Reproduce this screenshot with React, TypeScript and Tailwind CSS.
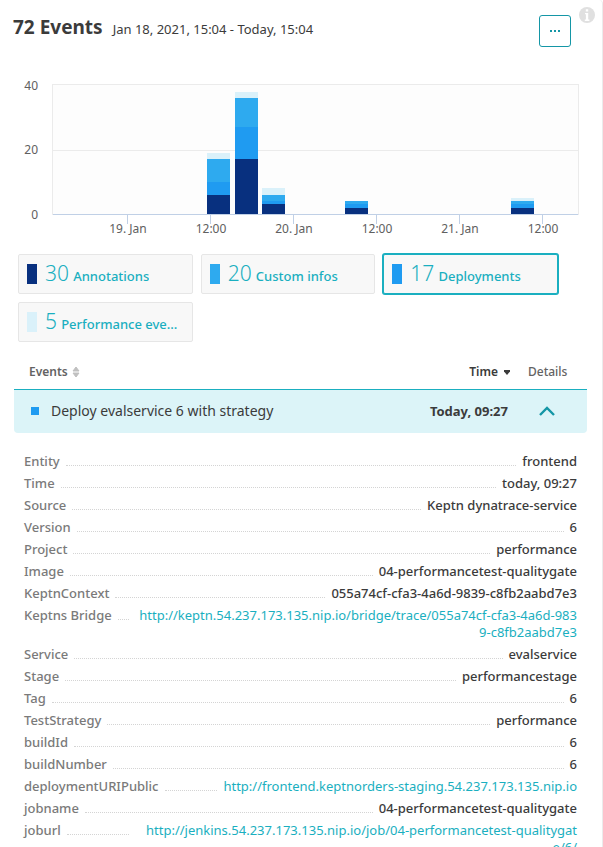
import { Fragment } from "react";
import type { ReactNode } from "react";

type Bar = { x: number; annotations: number; deployments: number; infos: number; performance: number };

const bars: Bar[] = [
  { x: 207, annotations: 6, deployments: 4, infos: 7, performance: 2 },
  { x: 235, annotations: 17, deployments: 10, infos: 9, performance: 2 },
  { x: 262, annotations: 3, deployments: 1, infos: 2, performance: 2 },
  { x: 345, annotations: 2, deployments: 1, infos: 1, performance: 0 },
  { x: 511, annotations: 2, deployments: 1, infos: 1, performance: 1 },
];

const ticks = [
  { x: 127, label: "19. Jan" },
  { x: 210, label: "12:00" },
  { x: 293, label: "20. Jan" },
  { x: 376, label: "12:00" },
  { x: 459, label: "21. Jan" },
  { x: 542, label: "12:00" },
];

const BASE = 139;
const y = (value: number) => Math.round(BASE - value * 3.22);

function Segment({ x, from, to, fill }: { x: number; from: number; to: number; fill: string }) {
  if (from === to) return null;
  return <rect x={x} y={y(to)} width="23" height={y(from) - y(to)} fill={fill} />;
}

function Chart() {
  return (
    <svg viewBox="0 0 602 170" className="block h-auto w-full text-[12px]" role="img" aria-label="Events over time" shapeRendering="crispEdges">
      <rect x="52.5" y="9.5" width="526" height="130" fill="#fdfdfd" stroke="#ebebeb" />
      <path d="M53 75.5H578" stroke="#ebebeb" />
      {bars.map((b) => {
        const a = b.annotations;
        const d = a + b.deployments;
        const i = d + b.infos;
        return (
          <g key={b.x}>
            <Segment x={b.x} from={0} to={a} fill="#08307f" />
            <Segment x={b.x} from={a} to={d} fill="#1f9bf1" />
            <Segment x={b.x} from={d} to={i} fill="#2eaaef" />
            <Segment x={b.x} from={i} to={i + b.performance} fill="#daf1fa" />
          </g>
        );
      })}
      <path d="M53 139.5H578" stroke="#c0d0e6" />
      <g fill="#606060" textAnchor="end">
        <text x="38" y="15">40</text>
        <text x="38" y="79">20</text>
        <text x="38" y="144">0</text>
      </g>
      {ticks.map((t) => (
        <g key={t.x}>
          <path d={`M${t.x + 0.5} 140V149`} stroke="#c0d0e6" />
          <text x={t.x + 1} y="158" fill="#606060" textAnchor="middle">{t.label}</text>
        </g>
      ))}
    </svg>
  );
}

function Tile({ count, label, swatch, selected = false }: { count: number; label: string; swatch: string; selected?: boolean }) {
  return (
    <button
      type="button"
      aria-pressed={selected}
      className={`flex h-10 min-w-0 items-center rounded-[2px] border bg-[#f8f8f8] px-2 text-left text-[#1aafc0] ${
        selected ? "border-[#1aafc0] ring-1 ring-[#1aafc0]" : "border-[#e6e6e6]"
      }`}
    >
      <span className={`mr-2 h-5 w-[10px] shrink-0 ${swatch}`} />
      <span className="truncate pb-[2px]">
        <span className="text-[21px] leading-7 font-light">{count}</span>{" "}
        <span className="text-[13px] font-medium">{label}</span>
      </span>
    </button>
  );
}

// Long addresses may wrap between their parts.
function Link({ parts }: { parts: string[] }) {
  return (
    <a href={parts.join("")} className="font-normal text-[#1aafc0]">
      {parts.map((part, i) => (
        <Fragment key={part}>
          {i > 0 && <wbr />}
          {part}
        </Fragment>
      ))}
    </a>
  );
}

const details: [string, ReactNode][] = [
  ["Entity", "frontend"],
  ["Time", "today, 09:27"],
  ["Source", "Keptn dynatrace-service"],
  ["Version", "6"],
  ["Project", "performance"],
  ["Image", "04-performancetest-qualitygate"],
  ["KeptnContext", "055a74cf-cfa3-4a6d-9839-c8fb2aabd7e3"],
  ["Keptns Bridge", <Link parts={["http://keptn.54.237.173.135.nip.io/bridge/trace/055a74cf-cfa3-4a6d-983", "9-c8fb2aabd7e3"]} />],
  ["Service", "evalservice"],
  ["Stage", "performancestage"],
  ["Tag", "6"],
  ["TestStrategy", "performance"],
  ["buildId", "6"],
  ["buildNumber", "6"],
  ["deploymentURIPublic", <Link parts={["http://frontend.keptnorders-staging.54.237.173.135.nip.io"]} />],
  ["jobname", "04-performancetest-qualitygate"],
  ["joburl", <Link parts={["http://jenkins.54.237.173.135.nip.io/job/04-performancetest-qualitygat", "e/6/"]} />],
];

export default function App() {
  return (
    <main className="h-screen overflow-hidden rounded-tr border-r border-[#ebebeb] bg-white font-['Noto_Sans',sans-serif] text-[#3b3b3b]">
      <header className="flex items-start pr-[7px] pl-[13px]">
        <div className="flex flex-1 items-baseline gap-[10px] pt-[13px]">
          <h1 className="text-[19px] leading-7 font-bold">72 Events</h1>
          <p className="text-[13px] leading-5">Jan 18, 2021, 15:04 - Today, 15:04</p>
        </div>
        <button type="button" aria-label="More actions" className="mt-[15px] flex size-8 items-center justify-center rounded-[3px] border border-[#1496a6]">
          <svg width="10" height="2" viewBox="0 0 10 2" fill="#1496a6" aria-hidden="true">
            <path d="M0 0h2v2H0zM4 0h2v2H4zM8 0h2v2H8z" />
          </svg>
        </button>
        <button type="button" aria-label="Information" className="mt-[7px] ml-2">
          <svg width="16" height="16" viewBox="0 0 16 16" aria-hidden="true">
            <circle cx="8" cy="8" r="8" fill="#e0e0e0" />
            <path d="M6.8 2.2h2.4v2.3H6.8zM6 6h3.2v6.6h1.2V14H5.8v-1.4h1.1V7.2H6z" fill="#fff" />
          </svg>
        </button>
      </header>

      <div className="pt-7">
        <Chart />
      </div>

      <div className="grid grid-cols-3 gap-2 pt-[9px] pr-[44px] pl-[18px]">
        <Tile count={30} label="Annotations" swatch="bg-[#08307f]" />
        <Tile count={20} label="Custom infos" swatch="bg-[#2eaaef]" />
        <Tile count={17} label="Deployments" swatch="bg-[#1f9bf1]" selected />
        <Tile count={5} label="Performance eve..." swatch="bg-[#daf1fa]" />
      </div>

      <div className="mt-[13px] pr-[15px] pl-[14px]">
        <table className="w-full border-separate border-spacing-0 text-left">
          <thead className="text-[12px] leading-4 text-[#636363]">
            <tr className="h-[34px]">
              <th className="pl-[15px] font-semibold">
                <button type="button" className="flex items-center gap-1">
                  Events
                  <svg width="8" height="12" viewBox="0 0 8 12" fill="#c0c0c0" aria-hidden="true">
                    <path d="M4 1l3 4H1zM4 11l3-4H1z" stroke="#c0c0c0" strokeLinejoin="round" />
                  </svg>
                </button>
              </th>
              <th className="font-semibold text-[#3b3b3b]">
                <button type="button" className="ml-auto flex items-center gap-[6px]">
                  Time
                  <svg width="6" height="5" viewBox="0 0 6 5" fill="#3b3b3b" aria-hidden="true">
                    <path d="M0 0h6v1.5L3 5 0 1.5z" />
                  </svg>
                </button>
              </th>
              <th className="w-[77px] pl-[18px] font-medium">Details</th>
            </tr>
          </thead>
          <tbody className="text-[14px] leading-5">
            <tr className="h-[44px] bg-[#dcf4f8]">
              <td className="rounded-bl border-t border-[#1aafc0] pb-[2px] pl-[17px]">
                <span className="flex items-center">
                  <span className="mr-3 size-2 bg-[#1f9bf1]" />
                  Deploy evalservice 6 with strategy
                </span>
              </td>
              <td className="border-t border-[#1aafc0] pr-[2px] pb-[2px] text-right text-[13px] font-bold">Today, 09:27</td>
              <td className="rounded-br border-t border-[#1aafc0] pb-[2px] pl-[29px]">
                <button type="button" aria-label="Collapse details" aria-expanded="true" className="block">
                  <svg width="16" height="10" viewBox="0 0 16 10" fill="none" stroke="#1496a6" strokeWidth="2.4" aria-hidden="true">
                    <path d="M1 9l7-7 7 7" />
                  </svg>
                </button>
              </td>
            </tr>
          </tbody>
        </table>
      </div>

      <dl className="flex flex-col gap-[5px] pt-5 pr-[25px] pl-6 text-[13px] leading-[17px] font-medium">
        {details.map(([name, value]) => (
          <div key={name} className="flex">
            <dt className="shrink-0 text-[#7a7a7a]">{name}</dt>
            <span className="mx-[6px] mt-3 min-w-2 flex-1 self-start border-b border-dotted border-[#d4d4d4]" />
            <dd className="max-w-[442px] text-right">{value}</dd>
          </div>
        ))}
      </dl>
    </main>
  );
}
